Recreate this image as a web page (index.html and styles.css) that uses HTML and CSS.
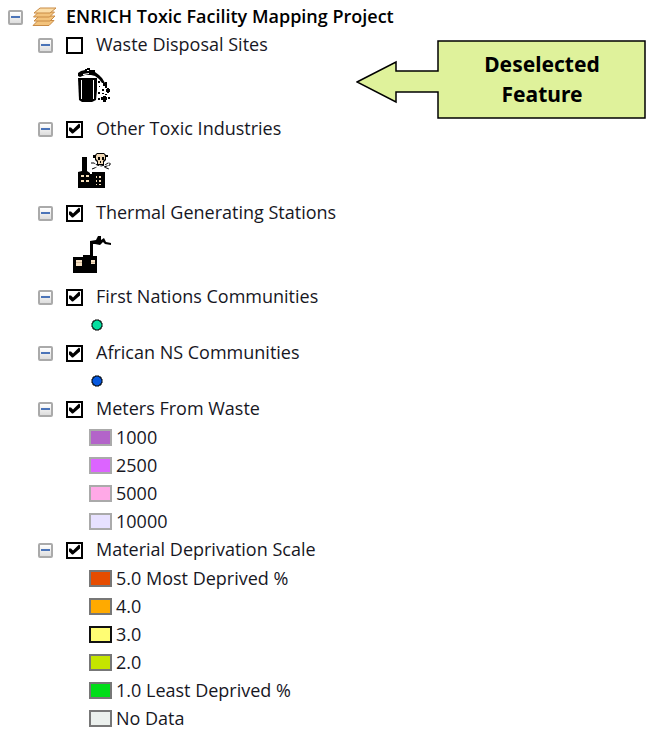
FILE: index.html
```html
<!DOCTYPE html>
<html lang="en">
<head>
<meta charset="utf-8">
<title>ENRICH Toxic Facility Mapping Project</title>
<link rel="stylesheet" href="styles.css">
</head>
<body>
<main class="contents">
  <header class="row project">
    <button class="toggle" type="button" aria-label="Collapse project"></button>
    <svg class="layers" viewBox="0 0 26 20" aria-hidden="true">
      <g fill="#f3c37c" stroke="#c98b45" stroke-width="1" stroke-linejoin="round">
        <path d="M1 18.500L6 13.500H22L17 18.500Z"/>
        <path d="M2 14L7 9H23L18 14Z"/>
        <path d="M1.500 10L6.500 5H22.500L17.500 10Z"/>
        <path d="M2 6L8 1H24L18 6Z" fill="#fbdda8"/>
      </g>
    </svg>
    <h1 class="title">ENRICH Toxic Facility Mapping Project</h1>
  </header>

  <ul class="tree">
    <li>
      <div class="row"><button class="toggle" type="button" aria-label="Collapse Waste Disposal Sites"></button><input class="check" type="checkbox" id="waste"><label for="waste">Waste Disposal Sites</label></div>
      <div class="symbol">
        <svg class="icon" viewBox="0 0 40 40" aria-hidden="true">
          <path d="M7 10V7L10 5L14 4V3H16V2H19V4H24V6L28 9L31 12L34 17H31L28 13L24 10L20 9H14L9 11Z"/>
          <path d="M16 4H18V5H16ZM12 8L18 7V8L13 9H12Z" fill="#fff"/>
          <path d="M7 12H26V24L25 34L21 36H11L8 34Z"/>
          <path d="M10 14h1v19h-1zM22 14h1v19h-1z" fill="#fff"/>
          <path d="M27 15h2v2h-2zM32 17h4v3h-4zM34 16h2v6h-2zM28 20h1v1h-1zM31 23h2v2h-2zM35 23h4v3h-4zM36 22h2v5h-2zM27 26h2v2h-2zM31 27h2v1h-2zM34 28h2v1h-2zM27 32h2v2h-2zM30 31h6v3h-6zM32 30h3v6h-3zM37 31h2v2h-2z"/>
        </svg>
      </div>
    </li>
    <li>
      <div class="row"><button class="toggle" type="button" aria-label="Collapse Other Toxic Industries"></button><input class="check" type="checkbox" id="toxic" checked><label for="toxic">Other Toxic Industries</label></div>
      <div class="symbol">
        <svg class="icon" viewBox="0 0 40 40" aria-hidden="true">
          <path d="M7 38V22L11 21V7H16V21L19 23V24H21V22H34V38Z"/>
          <path d="M10 25h3v2h-3zM15 25h3v2h-3zM10 30h3v2h-3zM15 30h3v2h-3zM25 26h1v2h-1zM28 26h2v2h-2zM25 30h1v2h-1zM28 30h2v2h-2zM25 34h1v1h-1zM28 34h2v1h-2z" fill="#f6dfba"/>
          <path d="M24 5L26 3H33L35 5V10L33 12V15H26V12L24 10Z"/>
          <path d="M26 4H33L34 6V9L32 11V14H27V11L25 9V6Z" fill="#efd7b4"/>
          <path d="M27 7h2v3h-2zM31 7h2v3h-2zM29 11h1v2h-1zM22 5h2v3h-2zM35 5h2v2h-2z"/>
          <path d="M20 13H23L26 15L30 16L34 15L37 13H39V15L33 17L38 19M21 19L26 17" fill="none" stroke="#000" stroke-dasharray="4 1"/>
        </svg>
      </div>
    </li>
    <li>
      <div class="row"><button class="toggle" type="button" aria-label="Collapse Thermal Generating Stations"></button><input class="check" type="checkbox" id="thermal" checked><label for="thermal">Thermal Generating Stations</label></div>
      <div class="symbol">
        <svg class="icon" viewBox="0 0 40 40" aria-hidden="true">
          <path d="M2 39V23H12V21H19V7L25 6L27 2H30V6L33 4L35 8L40 9V11L34 10L32 8L29 11L24 10H22V22H26V39Z"/>
          <path d="M5 26h6v6h-6zM20 26h4v4h-4z" fill="#f6e1c4"/>
          <path d="M5 28.500h6M20 28.500h4" stroke="#d5bd9c" fill="none"/>
        </svg>
      </div>
    </li>
    <li>
      <div class="row"><button class="toggle" type="button" aria-label="Collapse First Nations Communities"></button><input class="check" type="checkbox" id="first" checked><label for="first">First Nations Communities</label></div>
      <div class="row point"><svg class="dot green" viewBox="0 0 12 12" aria-hidden="true"><path d="M4 1H8V2H10V4H11V8H10V10H8V11H4V10H2V8H1V4H2V2H4Z"/></svg></div>
    </li>
    <li>
      <div class="row"><button class="toggle" type="button" aria-label="Collapse African NS Communities"></button><input class="check" type="checkbox" id="african" checked><label for="african">African NS Communities</label></div>
      <div class="row point"><svg class="dot blue" viewBox="0 0 12 12" aria-hidden="true"><path d="M4 1H8V2H10V4H11V8H10V10H8V11H4V10H2V8H1V4H2V2H4Z"/></svg></div>
    </li>
    <li>
      <div class="row"><button class="toggle" type="button" aria-label="Collapse Meters From Waste"></button><input class="check" type="checkbox" id="meters" checked><label for="meters">Meters From Waste</label></div>
      <ul class="classes">
        <li class="row"><span class="swatch purple"></span>1000</li>
        <li class="row"><span class="swatch violet"></span>2500</li>
        <li class="row"><span class="swatch pink"></span>5000</li>
        <li class="row"><span class="swatch lavender"></span>10000</li>
      </ul>
    </li>
    <li>
      <div class="row"><button class="toggle" type="button" aria-label="Collapse Material Deprivation Scale"></button><input class="check" type="checkbox" id="scale" checked><label for="scale">Material Deprivation Scale</label></div>
      <ul class="classes deprivation">
        <li class="row"><span class="swatch red"></span>5.0 Most Deprived %</li>
        <li class="row"><span class="swatch orange"></span>4.0</li>
        <li class="row"><span class="swatch yellow"></span>3.0</li>
        <li class="row"><span class="swatch lime"></span>2.0</li>
        <li class="row"><span class="swatch leaf"></span>1.0 Least Deprived %</li>
        <li class="row"><span class="swatch empty"></span>No Data</li>
      </ul>
    </li>
  </ul>

  <aside class="callout">
    <svg class="callout-shape" viewBox="0 0 290 80" aria-hidden="true">
      <path d="M1 42L40 22V31H82V1H289V78H82V52H40V62Z" fill="#dff29b" stroke="#000" stroke-width="1.500"/>
    </svg>
    <p class="callout-text">Deselected<br>Feature</p>
  </aside>
</main>
</body>
</html>
```
FILE: styles.css
```css
* {
  box-sizing: border-box;
}

body {
  margin: 0;
  background: #fff;
  color: #17171f;
  font: 18px/28px "Open Sans", "Noto Sans", sans-serif;
}

.contents {
  position: relative;
  padding: 3px 8px 0;
}

ul {
  margin: 0;
  padding: 0;
  list-style: none;
}

.row {
  display: flex;
  align-items: center;
  height: 28px;
}

.title {
  margin: 0 0 3px 8px;
  color: #000;
  font-size: 18px;
  font-weight: 600;
}

.layers {
  width: 26px;
  height: 20px;
  margin-left: 9px;
}

.tree {
  padding-left: 30px;
}

.toggle {
  display: flex;
  align-items: center;
  justify-content: center;
  width: 15px;
  height: 15px;
  padding: 0;
  border: 2px solid #aaa;
  border-radius: 2px;
  background: linear-gradient(#fff, #ddd);
}

.toggle::before {
  content: "";
  width: 9px;
  height: 2px;
  background: #4b74b8;
}

.check {
  appearance: none;
  width: 17px;
  height: 17px;
  margin: 0 13px;
  border: 2px solid #000;
  background: #fff;
}

.check:checked::before {
  content: "";
  display: block;
  width: 13px;
  height: 13px;
  background: #000;
  clip-path: polygon(1px 5px, 3px 5px, 5px 7px, 11px 1px, 12px 2px, 12px 5px, 5px 11px, 4px 11px, 1px 8px);
}

.row label {
  padding-bottom: 3px;
}

.symbol {
  display: flex;
  height: 56px;
  padding: 7px 0 0 33px;
}

.icon {
  width: 40px;
  height: 40px;
  overflow: visible;
}

.point {
  padding-left: 53px;
}

.dot {
  width: 12px;
  height: 12px;
  stroke: #000;
}

.green { fill: #05dfa0; }
.blue { fill: #0759df; }

.classes {
  padding: 0 0 1px 51px;
}

.classes .row {
  gap: 4px;
}

.swatch {
  width: 23px;
  height: 17px;
  border: 2px solid #aaa;
}

.deprivation .swatch { border-color: #777; }
.purple { background: #b364c9; }
.violet { background: #dc64ff; }
.pink { background: #ffa9e7; }
.lavender { background: #e7e1ff; }
.red { background: #e64c00; }
.orange { background: #ffaa00; }
.deprivation .yellow { background: #fffd73; border-color: #111; }
.lime { background: #c5e500; }
.leaf { background: #00dd18; }
.empty { background: #ebf0ed; }

.callout {
  position: absolute;
  top: 40px;
  left: 356px;
  width: 290px;
  height: 80px;
  padding: 9px 0 0 82px;
}

.callout-shape {
  position: absolute;
  inset: 0;
}

.callout-text {
  position: relative;
  margin: 0;
  color: #000;
  font-family: "Noto Sans", sans-serif;
  font-size: 21px;
  font-weight: 700;
  line-height: 30px;
  text-align: center;
}
```
